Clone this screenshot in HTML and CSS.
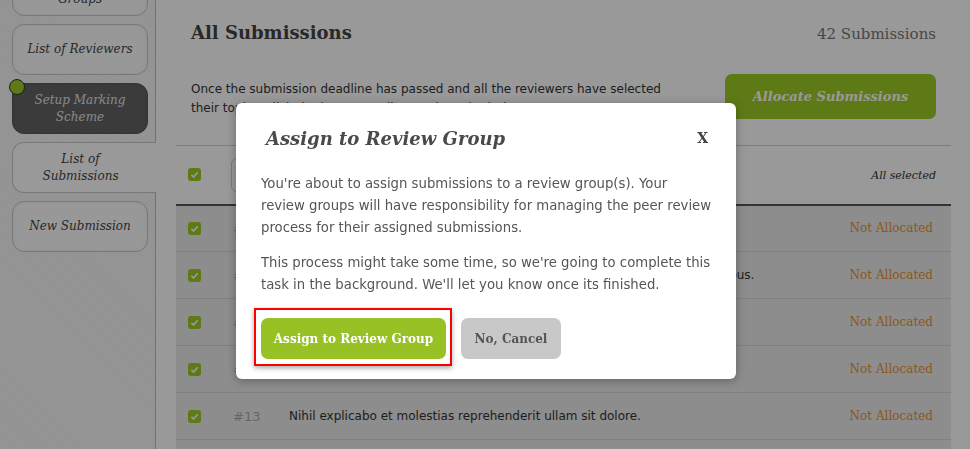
FILE: index.html
```html
<!DOCTYPE html>
<html lang="en">
<head>
<meta charset="utf-8">
<title>All Submissions</title>
<link rel="stylesheet" href="styles.css">
</head>
<body>
<div class="app">
  <aside class="sidebar">
    <nav class="nav">
      <a class="nav-btn">Review<br>Groups</a>
      <a class="nav-btn">List of Reviewers</a>
      <a class="nav-btn nav-dark"><span class="dot"></span>Setup Marking Scheme</a>
      <a class="nav-btn nav-active">List of<br>Submissions</a>
      <a class="nav-btn">New Submission</a>
    </nav>
  </aside>
  <main class="main">
    <header class="head">
      <h1 class="title">All Submissions</h1>
      <span class="count">42 Submissions</span>
    </header>
    <div class="intro">
      <p class="intro-text">Once the submission deadline has passed and all the reviewers have selected their topics, click the button to allocate the submissions to groups.</p>
      <button class="allocate">Allocate Submissions</button>
    </div>
    <table class="subs">
      <thead>
        <tr>
          <th class="c-check"><svg class="cb" viewBox="0 0 13 13"><rect width="13" height="13" rx="3" fill="#9dcb26"/><path d="M3.4 6.9 5.6 9 9.7 4.3" fill="none" stroke="#fff" stroke-width="1.7"/></svg></th>
          <th class="c-num" colspan="2"><span class="select">Bulk actions</span></th>
          <th class="c-status"><em>All selected</em></th>
        </tr>
      </thead>
      <tbody>
        <tr>
          <td class="c-check"><svg class="cb" viewBox="0 0 13 13"><rect width="13" height="13" rx="3" fill="#9dcb26"/><path d="M3.4 6.9 5.6 9 9.7 4.3" fill="none" stroke="#fff" stroke-width="1.7"/></svg></td>
          <td class="c-num">#17</td>
          <td class="c-text">Lorem ipsum dolor sit amet, consectetur adipisicing elit.</td>
          <td class="c-status">Not Allocated</td>
        </tr>
        <tr>
          <td class="c-check"><svg class="cb" viewBox="0 0 13 13"><rect width="13" height="13" rx="3" fill="#9dcb26"/><path d="M3.4 6.9 5.6 9 9.7 4.3" fill="none" stroke="#fff" stroke-width="1.7"/></svg></td>
          <td class="c-num">#16</td>
          <td class="c-text">Temporibus autem quibusdam et aut officiis debitis aut rerum necessitatibus.</td>
          <td class="c-status">Not Allocated</td>
        </tr>
        <tr>
          <td class="c-check"><svg class="cb" viewBox="0 0 13 13"><rect width="13" height="13" rx="3" fill="#9dcb26"/><path d="M3.4 6.9 5.6 9 9.7 4.3" fill="none" stroke="#fff" stroke-width="1.7"/></svg></td>
          <td class="c-num">#15</td>
          <td class="c-text">Itaque earum rerum hic tenetur a sapiente delectus.</td>
          <td class="c-status">Not Allocated</td>
        </tr>
        <tr>
          <td class="c-check"><svg class="cb" viewBox="0 0 13 13"><rect width="13" height="13" rx="3" fill="#9dcb26"/><path d="M3.4 6.9 5.6 9 9.7 4.3" fill="none" stroke="#fff" stroke-width="1.7"/></svg></td>
          <td class="c-num">#14</td>
          <td class="c-text">Nam libero tempore, cum soluta nobis est eligendi.</td>
          <td class="c-status">Not Allocated</td>
        </tr>
        <tr>
          <td class="c-check"><svg class="cb" viewBox="0 0 13 13"><rect width="13" height="13" rx="3" fill="#9dcb26"/><path d="M3.4 6.9 5.6 9 9.7 4.3" fill="none" stroke="#fff" stroke-width="1.7"/></svg></td>
          <td class="c-num">#13</td>
          <td class="c-text">Nihil explicabo et molestias reprehenderit ullam sit dolore.</td>
          <td class="c-status">Not Allocated</td>
        </tr>
        <tr>
          <td class="c-check"><svg class="cb" viewBox="0 0 13 13"><rect width="13" height="13" rx="3" fill="#9dcb26"/><path d="M3.4 6.9 5.6 9 9.7 4.3" fill="none" stroke="#fff" stroke-width="1.7"/></svg></td>
          <td class="c-num">#12</td>
          <td class="c-text">Ut enim ad minima veniam, quis nostrum exercitationem.</td>
          <td class="c-status">Not Allocated</td>
        </tr>
      </tbody>
    </table>
  </main>
</div>

<div class="overlay"></div>

<div class="modal" role="dialog">
  <div class="modal-head">
    <h2 class="modal-title">Assign to Review Group</h2>
    <span class="close">X</span>
  </div>
  <p class="modal-text">You're about to assign submissions to a review group(s). Your review groups will have responsibility for managing the peer review process for their assigned submissions.</p>
  <p class="modal-text">This process might take some time, so we're going to complete this task in the background. We'll let you know once its finished.</p>
  <div class="modal-actions">
    <span class="highlight"><button class="btn btn-green">Assign to Review Group</button></span>
    <button class="btn btn-grey">No, Cancel</button>
  </div>
</div>
</body>
</html>
```
FILE: styles.css
```css
* { box-sizing: border-box; }
html, body { margin: 0; padding: 0; height: 100%; overflow: hidden; }
body {
  background: #fff;
  font-family: "DejaVu Sans", Verdana, sans-serif;
  color: #333;
}
.app { display: flex; height: 100%; }

/* sidebar */
.sidebar {
  width: 156px;
  flex: none;
  background-color: #f8f8f8;
  background-image: repeating-linear-gradient(45deg, rgba(0,0,0,0.012) 0 2px, rgba(0,0,0,0) 2px 4px);
  border-right: 1px solid #bdbdbd;
  position: relative;
}
.nav {
  display: flex;
  flex-direction: column;
  gap: 8px;
  margin-top: -35px;
  padding-left: 12px;
}
.nav-btn {
  position: relative;
  display: flex;
  align-items: center;
  justify-content: center;
  text-align: center;
  width: 136px;
  height: 51px;
  border: 1px solid #c8c8c8;
  border-radius: 12px;
  background: #fdfdfd;
  box-shadow: inset 0 0 4px rgba(0,0,0,0.06);
  font-family: "DejaVu Serif", serif;
  font-style: italic;
  font-size: 12px;
  line-height: 17px;
  color: #444;
}
.nav-dark {
  background: #636363;
  border-color: #555;
  color: #e3e3e3;
}
.dot {
  position: absolute;
  left: -4px;
  top: -5px;
  width: 16px;
  height: 16px;
  border-radius: 50%;
  background: #9dcb26;
  border: 1px solid #333;
}
.nav-active {
  width: 144px;
  padding-right: 8px;
  background: #fff;
  border-right: none;
  border-radius: 12px 0 0 12px;
  box-shadow: none;
  margin-right: -1px;
}

/* main */
.main {
  flex: 1;
  padding: 0 19px 0 20px;
}
.head {
  display: flex;
  justify-content: space-between;
  align-items: baseline;
  padding: 22px 15px 0 15px;
  height: 58px;
}
.title {
  margin: 0;
  font-family: "DejaVu Serif", serif;
  font-weight: bold;
  font-size: 18px;
  color: #444;
}
.count {
  font-family: "DejaVu Serif", serif;
  font-size: 15px;
  color: #777;
}
.intro {
  display: flex;
  align-items: flex-start;
  padding: 16px 15px 0 15px;
  height: 87px;
}
.intro-text {
  margin: 6px 0 0 0;
  width: 500px;
  font-size: 12px;
  line-height: 19px;
  color: #333;
}
.allocate {
  margin-left: auto;
  width: 211px;
  height: 45px;
  border: none;
  border-radius: 7px;
  background: #9dcb26;
  color: #fff;
  font-family: "DejaVu Serif", serif;
  font-style: italic;
  font-weight: bold;
  font-size: 13px;
}

.subs {
  width: 100%;
  border-collapse: collapse;
  border-top: 1px solid #cfcfcf;
}
.subs th {
  height: 59px;
  border-bottom: 2px solid #555;
  text-align: left;
  font-weight: normal;
}
.subs td {
  height: 47px;
  background: #ebebeb;
  border-bottom: 1px solid #d6d6d6;
}
.c-check { width: 56px; padding-left: 12px; }
.cb { display: block; width: 13px; height: 13px; }
.c-num {
  width: 56px;
  font-size: 13px;
  color: #aaa;
}
.c-text { font-size: 12px; color: #333; }
.c-status {
  text-align: right !important;
  padding-right: 18px;
  font-family: "DejaVu Serif", serif;
  font-size: 12px;
  color: #e8922e;
  white-space: nowrap;
}
.subs th.c-status { padding-right: 15px; }
.subs th.c-status em {
  font-size: 11px;
  color: #333;
}
.select {
  display: inline-block;
  width: 180px;
  height: 34px;
  margin-left: -2px;
  border: 1px solid #ccc;
  border-radius: 6px;
  background: #fff;
  font-size: 12px;
  line-height: 32px;
  padding-left: 10px;
  color: #555;
}

/* overlay & modal */
.overlay {
  position: fixed;
  inset: 0;
  z-index: 10;
  background: rgba(0,0,0,0.4);
}
.modal {
  position: absolute;
  z-index: 11;
  left: 236px;
  top: 103px;
  width: 500px;
  height: 276px;
  background: #fff;
  border-radius: 6px;
  box-shadow: 0 2px 10px rgba(0,0,0,0.3);
  padding: 22px 22px 20px 25px;
}
.modal-head {
  display: flex;
  justify-content: space-between;
  align-items: center;
  padding: 0 6px 0 5px;
  height: 26px;
  margin-bottom: 22px;
}
.modal-title {
  margin: 0;
  font-family: "DejaVu Serif", serif;
  font-style: italic;
  font-weight: bold;
  font-size: 18px;
  color: #4a4a4a;
}
.close {
  font-family: "DejaVu Serif", serif;
  font-weight: bold;
  font-size: 14px;
  color: #444;
}
.modal-text {
  margin: 0 0 13px 0;
  font-size: 13.25px;
  line-height: 22px;
  color: #555;
}
.modal-actions {
  display: flex;
  align-items: flex-start;
  margin-top: 22px;
}
.highlight {
  display: inline-flex;
  margin: -10px 9px -7px -7px;
  padding: 8px 4px 5px 5px;
  border: 2px solid #f00;
  box-shadow: 0 2px 5px rgba(0,0,0,0.35);
}
.btn {
  height: 41px;
  border: none;
  border-radius: 7px;
  font-family: "DejaVu Serif", serif;
  font-weight: bold;
  font-size: 12px;
}
.btn-green { width: 185px; background: #97c124; color: #fff; }
.btn-grey { width: 100px; background: #c8c8c8; color: #555; }
```
